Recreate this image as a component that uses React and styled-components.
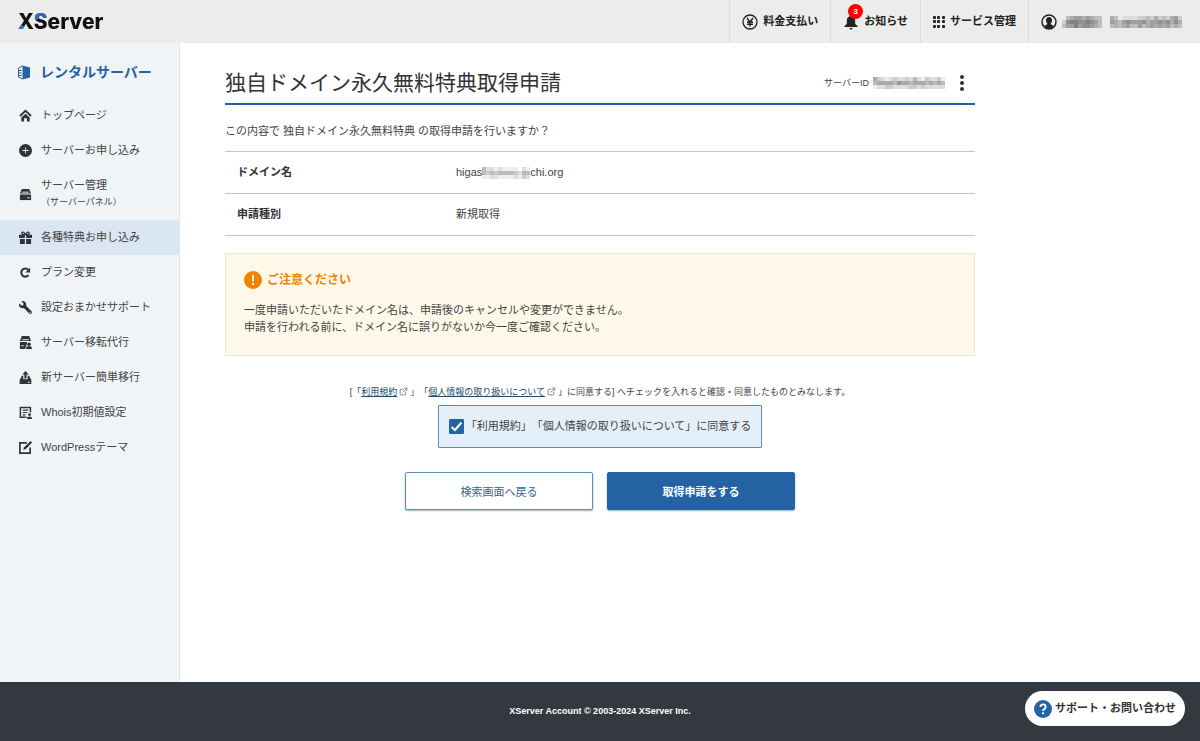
import { useState } from "react";
import styled, { createGlobalStyle } from "styled-components";
import { FaWrench } from "react-icons/fa";
import { BsPlusCircleFill } from "react-icons/bs";
import { FiExternalLink } from "react-icons/fi";

const GlobalStyle = createGlobalStyle`
    * {
        box-sizing: border-box;
    }
    body {
        margin: 0;
        background: #fff;
        color: #444;
        font-family: "Liberation Sans", "Noto Sans CJK JP", sans-serif;
        font-size: 11px;
        line-height: 17px;
        text-spacing-trim: space-all;
    }
    a {
        color: inherit;
        text-decoration: none;
    }
    button {
        font-family: inherit;
        cursor: pointer;
    }
    svg {
        display: block;
        flex: none;
    }
`;

const Page = styled.div`
    min-height: 100vh;
    display: flex;
    flex-direction: column;
`;

const Header = styled.header`
    height: 43px;
    display: flex;
    justify-content: space-between;
    background: #ececec;
`;

const Logo = styled.a`
    display: flex;
    align-items: center;
    padding-left: 18px;
`;

const LogoText = styled.span`
    font-family: Inter, "Liberation Sans", sans-serif;
    font-size: 21px;
    font-weight: 800;
    line-height: 26px;
    color: transparent;
    background:
        linear-gradient(45deg, #2f6fc0 60%, transparent 60%) 0 13px / 9px 9px no-repeat,
        linear-gradient(160deg, #2f6fc0 55%, transparent 55%) 15px 4px / 13px 10px no-repeat,
        #111;
    background-clip: text;
    -webkit-background-clip: text;
`;

const HeaderNav = styled.nav`
    display: flex;
    padding-right: 6px;
`;

const HeaderItem = styled.a`
    display: flex;
    align-items: center;
    gap: 5px;
    padding: 0 12px;
    border-left: 1px solid #dcdcdc;
    color: #222;
    font-weight: bold;
`;

const BellWrap = styled.span`
    position: relative;
`;

const Count = styled.span`
    position: absolute;
    top: -10px;
    left: 5px;
    width: 15px;
    height: 15px;
    border-radius: 50%;
    background: #f00;
    color: #fff;
    font-size: 8px;
    line-height: 15px;
    text-align: center;
`;

const Body = styled.div`
    flex: 1;
    display: flex;
`;

const Sidebar = styled.aside`
    width: 180px;
    flex: none;
    background: #f0f4f7;
    border-right: 1px solid #e2e7ec;
`;

const SideTitle = styled.a`
    display: flex;
    align-items: center;
    gap: 9px;
    padding: 19px 17px 16px;
    color: #2562a4;
    font-size: 14px;
    font-weight: bold;
    line-height: 20px;
`;

const SideItem = styled.a`
    display: flex;
    align-items: center;
    gap: 9px;
    padding: 9px 10px 9px 19px;
    background: ${(props) => (props.$active ? "#dae6f2" : "transparent")};

    svg {
        color: #2f343b;
    }
    small {
        display: block;
        font-size: 9px;
    }
`;

const Main = styled.main`
    flex: 1;
    padding: 25px 225px 40px 45px;
`;

const TitleBar = styled.div`
    display: flex;
    align-items: center;
    justify-content: space-between;
    padding-bottom: 5px;
    border-bottom: 2px solid #2562a4;
`;

const Title = styled.h1`
    margin: 0;
    font-size: 21px;
    font-weight: normal;
    line-height: 30px;
    color: #333;
`;

const ServerId = styled.div`
    display: flex;
    align-items: center;
    gap: 4px;
    font-size: 9px;
`;

const MenuButton = styled.button`
    border: 0;
    padding: 0 11px;
    background: none;
    color: #333;
`;

const Lead = styled.p`
    margin: 18px 0 11px;
`;

const Table = styled.table`
    width: 100%;
    border-collapse: collapse;
    border-top: 1px solid #b9c9d4;

    tr {
        border-bottom: 1px solid #b9c9d4;
    }
    th,
    td {
        padding: 12px;
        text-align: left;
    }
    th {
        width: 219px;
        color: #333;
    }
`;

const DomainName = styled.span`
    display: flex;
    align-items: center;
`;

const Notice = styled.section`
    margin-top: 17px;
    padding: 16px 18px 19px;
    background: #fef8e9;
    border: 1px solid #ede6cd;

    h2 {
        display: flex;
        align-items: center;
        gap: 5px;
        margin: 0 0 12px;
        color: #f08300;
        font-size: 12px;
        line-height: 20px;
    }
    p {
        margin: 0;
    }
`;

const Terms = styled.p`
    margin: 28px 0 4px;
    font-size: 9px;
    text-align: center;

    a {
        color: #234a66;
        text-decoration: underline;
    }
    svg {
        display: inline-block;
        margin: 0 2px;
        vertical-align: -1px;
        color: #666;
    }
`;

const Agree = styled.label`
    display: flex;
    align-items: center;
    gap: 2px;
    width: fit-content;
    margin: 0 auto;
    padding: 12px 10px;
    background: #e5eff9;
    border: 1px solid #5a8eb5;
    border-radius: 1px;
`;

const CheckBox = styled.span`
    display: grid;
    width: 15px;
    height: 15px;

    input {
        grid-area: 1 / 1;
        width: 15px;
        height: 15px;
        margin: 0;
        appearance: none;
        border: 1px solid #2562a4;
        border-radius: 1px;
        background: #fff;
    }
    input:checked {
        background: #2562a4;
    }
    svg {
        grid-area: 1 / 1;
        z-index: 1;
        pointer-events: none;
    }
`;

const Buttons = styled.div`
    display: flex;
    justify-content: center;
    gap: 14px;
    margin-top: 24px;
`;

const Button = styled.button`
    width: 188px;
    height: 38px;
    border: 1px solid ${(props) => (props.$primary ? "#2562a4" : "#5a8eb5")};
    border-radius: 2px;
    background: ${(props) => (props.$primary ? "#2562a4" : "#fff")};
    color: ${(props) => (props.$primary ? "#fff" : "#2f6a94")};
    font-size: 11px;
    font-weight: ${(props) => (props.$primary ? "bold" : "normal")};
    box-shadow: 0 1px 2px rgba(0, 60, 110, 0.4);
`;

const Footer = styled.footer`
    height: 59px;
    display: flex;
    align-items: center;
    justify-content: center;
    background: #34383f;
    color: #fff;
    font-size: 9px;
    font-weight: bold;
`;

const Support = styled.a`
    position: fixed;
    right: 15px;
    bottom: 15px;
    display: flex;
    align-items: center;
    gap: 3px;
    height: 35px;
    padding: 0 9px;
    border-radius: 18px;
    background: #fff;
    color: #333;
    font-weight: bold;
`;

const icons = {
    home: (
        <>
            <path d="M1 7.500 7 2l6 5.500" fill="none" stroke="currentColor" strokeWidth="2" />
            <path d="M2.500 9.200 7 5l4.500 4.200V13.500H8.500V10h-3v3.500h-3z" />
        </>
    ),
    server: (
        <>
            <path d="M3 1h8l2 5H1z" />
            <path d="M1 7h12v6H1z" />
            <path d="M3.500 4.500h7M9 10.500h2.500" stroke="#f0f4f7" strokeWidth="1" />
        </>
    ),
    gift: (
        <>
            <path d="M0 4h6.300v3.500H0zM7.700 4H14v3.500H7.700zM1 8.500h5.300V14H1zM7.700 8.500H13V14H7.700z" />
            <path d="M7 4C5.500.5 3 .5 3 2.300 3 3.500 5 4 7 4zM7 4c1.500-3.500 4-3.500 4-1.700C11 3.500 9 4 7 4z" fill="none" stroke="currentColor" strokeWidth="1.300" />
        </>
    ),
    refresh: (
        <>
            <path d="M10.300 9.800A4.400 4.400 0 1 1 10 4" fill="none" stroke="currentColor" strokeWidth="2.200" />
            <path d="M12 1.800V7H6.800z" />
        </>
    ),
    transfer: (
        <>
            <path d="M3 0h8l2 5.500H1z" />
            <path d="M1 6.500h7.500v2L6.500 14H1z" />
            <path d="M3.500 4h7M2.500 10.500H5" stroke="#f0f4f7" />
            <circle cx="10.800" cy="8.800" r="1.900" />
            <path d="M7.500 14c0-2.200 1-3.200 3.300-3.200S14 11.800 14 14z" />
        </>
    ),
    migrate: (
        <>
            <path d="M7 0l3.500 3.800H8.200V8H5.800V3.800H3.500z" />
            <path d="M3 5h1.600v4h4.800V5H11l2.300 5H.7z" />
            <path d="M.7 9.500h12.600V14H.7z" />
            <path d="M9.500 12.200h2" stroke="#f0f4f7" />
        </>
    ),
    whois: (
        <>
            <path d="M8 12.200H1.500V1.500h10.800V7" fill="none" stroke="currentColor" strokeWidth="1.600" />
            <path d="M4 4.500h6M4 7h5M4 9.500h3" stroke="currentColor" strokeWidth="1.200" />
            <circle cx="11.300" cy="9.300" r="1.500" />
            <path d="M8.500 14c0-2 1-2.700 2.800-2.700S14 12 14 14z" />
        </>
    ),
    theme: (
        <>
            <path d="M8.500 2H1v11h11V7" fill="none" stroke="currentColor" strokeWidth="1.800" />
            <path d="M12.500 0L14 1.500 7.500 8.500 4.500 9.800l1-3z" />
        </>
    ),
};

function Icon({ name }) {
    return (
        <svg width="13" height="13" viewBox="0 0 14 14" fill="currentColor" aria-hidden="true">
            {icons[name]}
        </svg>
    );
}

const WrenchIcon = styled(FaWrench)`
    transform: scaleX(-1);
`;

const menu = [
    { label: "トップページ", icon: <Icon name="home" /> },
    { label: "サーバーお申し込み", icon: <BsPlusCircleFill size={13} /> },
    { label: "サーバー管理", sub: "（サーバーパネル）", icon: <Icon name="server" /> },
    { label: "各種特典お申し込み", icon: <Icon name="gift" />, active: true },
    { label: "プラン変更", icon: <Icon name="refresh" /> },
    { label: "設定おまかせサポート", icon: <WrenchIcon size={13} /> },
    { label: "サーバー移転代行", icon: <Icon name="transfer" /> },
    { label: "新サーバー簡単移行", icon: <Icon name="migrate" /> },
    { label: "Whois初期値設定", icon: <Icon name="whois" /> },
    { label: "WordPressテーマ", icon: <Icon name="theme" /> },
];

// hides private values behind coarse grey tiles, one digit per tile (0 = clear, 9 = dark)
function Mosaic({ rows, tile = 4 }) {
    return (
        <svg
            width={rows[0].length * tile}
            height={rows.length * tile}
            shapeRendering="crispEdges"
            role="img"
            aria-label="非公開"
        >
            {rows.map((row, y) =>
                [...row].map((level, x) => (
                    <rect
                        key={x + "-" + y}
                        x={x * tile}
                        y={y * tile}
                        width={tile}
                        height={tile}
                        fill="#333"
                        opacity={level / 12}
                    />
                ))
            )}
        </svg>
    );
}

export default function App() {
    const [agreed, setAgreed] = useState(true);

    return (
        <Page>
            <GlobalStyle />
            <Header>
                <Logo href="#" aria-label="XServer">
                    <LogoText>XServer</LogoText>
                </Logo>
                <HeaderNav>
                    <HeaderItem href="#">
                        <svg width="16" height="16" viewBox="0 0 16 16" fill="none" stroke="currentColor">
                            <circle cx="8" cy="8" r="7" strokeWidth="1.300" />
                            <path d="M5 4l3 4 3-4M8 8v4.500M5 8.300h6M5 10.300h6" strokeWidth="1.400" />
                        </svg>
                        料金支払い
                    </HeaderItem>
                    <HeaderItem href="#">
                        <BellWrap>
                            <svg width="16" height="16" viewBox="0 0 14 16" fill="currentColor">
                                <path d="M7 1a1.200 1.200 0 0 0-1.200 1.300C3.500 3 2.800 5 2.800 7v3L.5 12v1h13v-1l-2.300-2V7c0-2-.7-4-3-4.700A1.200 1.200 0 0 0 7 1zM5.500 14h3a1.500 1.500 0 0 1-3 0z" />
                            </svg>
                            <Count>3</Count>
                        </BellWrap>
                        お知らせ
                    </HeaderItem>
                    <HeaderItem href="#">
                        <svg width="12" height="12" viewBox="0 0 12 12" fill="currentColor">
                            {[0, 4, 9].map((y) =>
                                [0, 4, 9].map((x) => (
                                    <rect key={x + "-" + y} x={x} y={y} width="3" height="3" rx="1" />
                                ))
                            )}
                        </svg>
                        サービス管理
                    </HeaderItem>
                    <HeaderItem href="#">
                        <svg width="16" height="16" viewBox="0 0 16 16">
                            <circle cx="8" cy="8" r="7" fill="none" stroke="#222" strokeWidth="1.500" />
                            <path d="M8 3c2 0 3 1.300 3 3.200 0 1.500-.6 2.600-1.300 3.200v.9l3 1.500A6.500 6.500 0 0 1 8 15a6.500 6.500 0 0 1-4.700-3.200l3-1.500v-.9C5.600 8.800 5 7.700 5 6.200 5 4.300 6 3 8 3z" fill="#222" />
                        </svg>
                        <Mosaic
                            rows={[
                                "034554543300430111122324232452",
                                "267766765300543565556455656464",
                                "355756654300343453353454545343",
                            ]}
                        />
                    </HeaderItem>
                </HeaderNav>
            </Header>
            <Body>
                <Sidebar>
                    <SideTitle href="#">
                        <svg width="14" height="15" viewBox="0 0 14 15">
                            <path d="M5.500 0.500v14L13 12.500v-10z" fill="#2562a4" />
                            <path d="M5.500 1L1.500 3v9l4 2M2 5.500h2.500M2 8h2.500M2 10.500h2.500" fill="none" stroke="#2562a4" />
                        </svg>
                        レンタルサーバー
                    </SideTitle>
                    <nav>
                        {menu.map((item) => (
                            <SideItem key={item.label} href="#" $active={item.active}>
                                {item.icon}
                                <span>
                                    {item.label}
                                    {item.sub && <small>{item.sub}</small>}
                                </span>
                            </SideItem>
                        ))}
                    </nav>
                </Sidebar>
                <Main>
                    <TitleBar>
                        <Title>独自ドメイン永久無料特典取得申請</Title>
                        <ServerId>
                            サーバーID
                            <Mosaic rows={["532123223242132231", "455554655455545454", "122332222332322222"]} />
                            <MenuButton type="button" aria-label="メニュー">
                                <svg width="4" height="16" viewBox="0 0 4 16" fill="currentColor">
                                    <circle cx="2" cy="2" r="2" />
                                    <circle cx="2" cy="8" r="2" />
                                    <circle cx="2" cy="14" r="2" />
                                </svg>
                            </MenuButton>
                        </ServerId>
                    </TitleBar>
                    <Lead>この内容で 独自ドメイン永久無料特典 の取得申請を行いますか？</Lead>
                    <Table>
                        <tbody>
                            <tr>
                                <th scope="row">ドメイン名</th>
                                <td>
                                    <DomainName>
                                        higas
                                        <Mosaic rows={["422121111021", "434344443244", "112211112132"]} />
                                        chi.org
                                    </DomainName>
                                </td>
                            </tr>
                            <tr>
                                <th scope="row">申請種別</th>
                                <td>新規取得</td>
                            </tr>
                        </tbody>
                    </Table>
                    <Notice>
                        <h2>
                            <svg width="18" height="18" viewBox="0 0 18 18">
                                <circle cx="9" cy="9" r="9" fill="#f08300" />
                                <path d="M9 4v6.500M9 12v2" stroke="#fff" strokeWidth="1.800" />
                            </svg>
                            ご注意ください
                        </h2>
                        <p>
                            一度申請いただいたドメイン名は、申請後のキャンセルや変更ができません。
                            <br />
                            申請を行われる前に、ドメイン名に誤りがないか今一度ご確認ください。
                        </p>
                    </Notice>
                    <Terms>
                        [「<a href="#">利用規約</a>
                        <FiExternalLink size={9} />」「<a href="#">個人情報の取り扱いについて</a>
                        <FiExternalLink size={9} />」に同意する] へチェックを入れると確認・同意したものとみなします。
                    </Terms>
                    <Agree htmlFor="agree">
                        <CheckBox>
                            <input
                                id="agree"
                                type="checkbox"
                                checked={agreed}
                                onChange={(e) => setAgreed(e.target.checked)}
                            />
                            <svg width="15" height="15" viewBox="0 0 15 15">
                                <path d="M2.500 8l3.500 3 6.500-7.500" fill="none" stroke="#fff" strokeWidth="2" />
                            </svg>
                        </CheckBox>
                        「利用規約」「個人情報の取り扱いについて」に同意する
                    </Agree>
                    <Buttons>
                        <Button type="button">検索画面へ戻る</Button>
                        <Button type="submit" $primary disabled={!agreed}>
                            取得申請をする
                        </Button>
                    </Buttons>
                </Main>
            </Body>
            <Footer>XServer Account © 2003-2024 XServer Inc.</Footer>
            <Support href="#">
                <svg width="18" height="18" viewBox="0 0 18 18">
                    <circle cx="9" cy="9" r="9" fill="#2562a4" />
                    <path d="M6.300 7C6.300 3.600 11.700 3.600 11.700 7c0 2-2.700 2-2.700 4M9 12.300v2" fill="none" stroke="#fff" strokeWidth="1.800" />
                </svg>
                サポート・お問い合わせ
            </Support>
        </Page>
    );
}
